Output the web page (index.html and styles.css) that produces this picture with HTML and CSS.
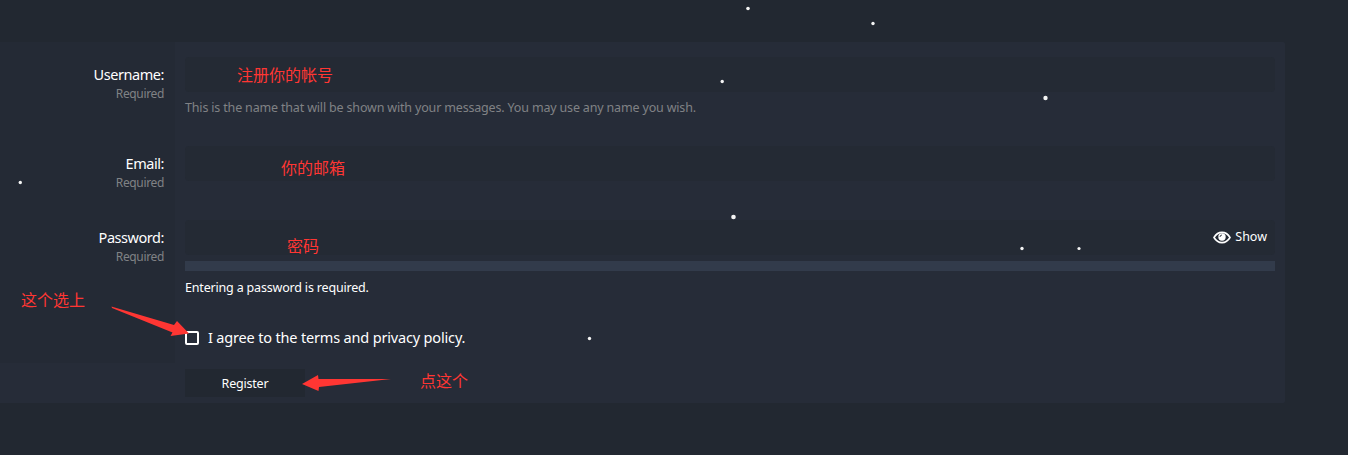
FILE: index.html
```html
<!DOCTYPE html>
<html lang="en">
<head>
<meta charset="UTF-8" />
<title>Register</title>
<link rel="stylesheet" href="styles.css">
</head>
<body>

<form class="register">
  <div class="row row-username">
    <div class="label"><label for="username">Username:</label><span class="hint">Required</span></div>
    <div class="field">
      <input type="text" id="username" class="input">
      <div class="explain">This is the name that will be shown with your messages. You may use any name you wish.</div>
    </div>
  </div>
  <div class="row row-email">
    <div class="label"><label for="email">Email:</label><span class="hint">Required</span></div>
    <div class="field"><input type="email" id="email" class="input"></div>
  </div>
  <div class="row row-password">
    <div class="label"><label for="password">Password:</label><span class="hint">Required</span></div>
    <div class="field">
      <div class="input password">
        <input type="password" id="password">
        <span class="show">
          <svg width="18" height="14" viewBox="0 0 18 14">
            <path d="M1 7.500C3 4.100 5.700 2.400 9 2.400S15 4.100 17 7.500C15 10.900 12.300 12.600 9 12.600S3 10.900 1 7.500Z" fill="none" stroke="#fff" stroke-width="1.600"/>
            <circle cx="9" cy="7" r="3.700" fill="#fff"/>
            <path d="M7 7A2 2 0 0 1 9 5" fill="none" stroke="#242a34" stroke-width=".9"/>
          </svg>
          <span>Show</span>
        </span>
      </div>
      <div class="meter"></div>
      <div class="strength">Entering a password is required.</div>
    </div>
  </div>
  <div class="row row-agree">
    <div class="label"></div>
    <div class="field">
      <label class="agree"><span class="box"></span><span>I agree to the terms and privacy policy.</span></label>
    </div>
  </div>
  <div class="submit"><button type="button">Register</button></div>
</form>

<!-- notes, arrows and snow float over the form -->
<span class="note n1">注册你的帐号</span>
<span class="note n2">你的邮箱</span>
<span class="note n3">密码</span>
<span class="note n4">这个选上</span>
<span class="note n5">点这个</span>
<svg class="overlay" width="1348" height="455" viewBox="0 0 1348 455">
  <g fill="#ff3633">
    <path d="M111.500 306.500L113 307L174 325L177 321L189 333.500L170.500 336L172.500 332.500L112 308Z"/>
    <path d="M302 384L318 375L318.500 379L391 379L319 387L318.500 391Z"/>
  </g>
  <g fill="#f4f4f4">
    <circle cx="748" cy="8.500" r="1.800"/>
    <circle cx="873" cy="23.500" r="1.700"/>
    <circle cx="722.200" cy="81.500" r="1.700"/>
    <circle cx="1045.500" cy="98" r="2.200"/>
    <circle cx="20.300" cy="182.500" r="1.700"/>
    <circle cx="733.500" cy="217" r="2.300"/>
    <circle cx="1022" cy="248.500" r="1.700"/>
    <circle cx="1079" cy="248.500" r="1.600"/>
    <circle cx="589.500" cy="338.500" r="1.700"/>
  </g>
</svg>

</body>
</html>
```
FILE: styles.css
```css
* {
  box-sizing: border-box;
}
body {
  margin: 0;
  padding-top: 42px;
  height: 455px;
  overflow: hidden;
  background: #222831;
  color: #fff;
  font-family: "Noto Sans", "Noto Sans CJK SC", sans-serif;
  font-size: 14.5px;
}
.register {
  width: 1285px;
  background: #262c38;
  border-radius: 0 2px 2px 0;
}
.row {
  display: flex;
}
.row-username {
  height: 89px;
}
.row-email {
  height: 74px;
}
.row-password {
  height: 112px;
}
.row-agree {
  height: 46px;
}
.label {
  width: 175px;
  padding: 22px 11px 0 0;
  background: #242a35;
  text-align: right;
  line-height: 20px;
  letter-spacing: -0.45px;
}
.label label,
.hint {
  display: block;
}
.hint {
  color: #808285;
  font-size: 12px;
  line-height: 20px;
  letter-spacing: -0.35px;
}
.field {
  flex: 1;
  padding: 15px 10px 0;
}
.input {
  display: block;
  width: 100%;
  height: 35px;
  border: 0;
  border-radius: 4px;
  background: #242a34;
  color: #fff;
  outline: none;
}
.password {
  display: flex;
  align-items: center;
  padding-right: 8px;
}
.password input {
  flex: 1;
  border: 0;
  background: none;
  color: #fff;
}
.show {
  display: flex;
  align-items: center;
  gap: 4px;
  padding-bottom: 2px;
  font-size: 12.5px;
}
.explain {
  margin-top: 7px;
  color: #808285;
  font-size: 12.5px;
  line-height: 18px;
  letter-spacing: -0.17px;
}
.meter {
  height: 10px;
  margin-top: 6px;
  background: #323b4b;
}
.strength {
  margin-top: 8px;
  font-size: 12.5px;
  line-height: 18px;
  letter-spacing: -0.18px;
}
.row-agree .field {
  padding-top: 10px;
}
.agree {
  display: flex;
  align-items: center;
  gap: 9px;
  line-height: 20px;
  letter-spacing: -0.17px;
}
.box {
  width: 14px;
  height: 14px;
  margin-top: 1px;
  border: 2px solid #fff;
  border-radius: 2px;
}
.submit {
  height: 40px;
  padding: 6px 0 0 185px;
}
.submit button {
  display: block;
  width: 120px;
  height: 28px;
  padding: 0;
  border: 0;
  background: #222831;
  color: #fff;
  font-family: inherit;
  font-size: 12.5px;
  letter-spacing: -0.2px;
}
.note {
  position: absolute;
  color: #ff3633;
  font-family: "Noto Sans CJK SC", sans-serif;
  font-size: 16px;
  line-height: 20px;
  white-space: nowrap;
}
.n1 {
  left: 237px;
  top: 64px;
}
.n2 {
  left: 281px;
  top: 157px;
}
.n3 {
  left: 287px;
  top: 235px;
}
.n4 {
  left: 21px;
  top: 289px;
}
.n5 {
  left: 420px;
  top: 370px;
}
.overlay {
  position: absolute;
  left: 0;
  top: 0;
  pointer-events: none;
}
```
